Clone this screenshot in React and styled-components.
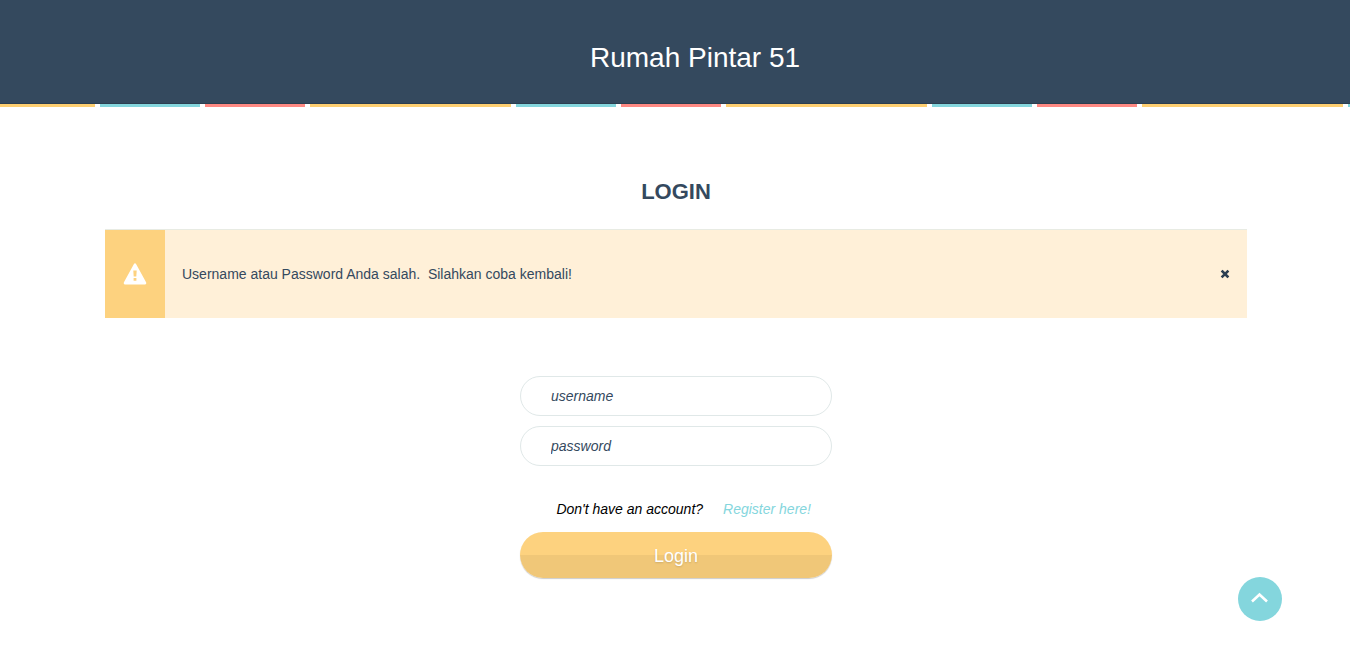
import React, { useState } from "react";
import styled, { createGlobalStyle } from "styled-components";

const GlobalStyle = createGlobalStyle`
  *, *::before, *::after { box-sizing: border-box; }
  body {
    margin: 0;
    background: #fff;
    color: #34495e;
    font-family: "Liberation Sans", Arial, sans-serif;
    font-size: 14px;
    line-height: 20px;
  }
`;

const Header = styled.header`
  height: 104px;
  padding: 41px 0 0 40px;
  background: #34495e;
  border-bottom: 1px solid #2c3e50;
  text-align: center;
`;

const Brand = styled.h1`
  margin: 0;
  color: #fff;
  font-size: 28px;
  font-weight: 400;
  line-height: 34px;
`;

const Stripes = styled.div`
  height: 3px;
  background: repeating-linear-gradient(
    90deg,
    #fecf71 0 95px,
    #fff 95px 100px,
    #84d6dd 100px 200px,
    #fff 200px 205px,
    #ff8983 205px 305px,
    #fff 305px 310px,
    #fecf71 310px 416px
  );
`;

const Main = styled.main`
  display: flex;
  flex-direction: column;
  align-items: center;
  padding: 70px 103px 40px 105px;
`;

const Title = styled.h2`
  margin: 0;
  font-size: 22px;
  font-weight: 700;
  line-height: 30px;
`;

const Alert = styled.div`
  display: flex;
  align-items: stretch;
  width: 100%;
  max-width: 1142px;
  min-height: 89px;
  margin-top: 22px;
  background: #fff0d8;
  border-top: 1px solid #e8ebe3;
`;

const AlertIcon = styled.div`
  display: flex;
  align-items: center;
  justify-content: center;
  flex: none;
  width: 60px;
  background: #fdd27f;
`;

const AlertText = styled.p`
  flex: 1;
  align-self: center;
  margin: 0;
  padding-left: 17px;
  white-space: pre-wrap;
`;

const CloseButton = styled.button`
  display: flex;
  align-items: center;
  justify-content: center;
  align-self: center;
  width: 45px;
  height: 40px;
  padding: 0;
  border: 0;
  background: none;
  color: #2c3e50;
  cursor: pointer;
`;

const Form = styled.form`
  display: flex;
  flex-direction: column;
  width: 312px;
  max-width: 100%;
  margin-top: 58px;
`;

const Field = styled.input`
  height: 40px;
  margin-bottom: 10px;
  padding: 0 30px;
  border: 1px solid #e0e8e8;
  border-radius: 20px;
  background: #fff;
  color: #34495e;
  font: italic 14px/20px "Liberation Sans", Arial, sans-serif;
  outline: none;
  &::placeholder { color: #34495e; opacity: 1; }
`;

const Prompt = styled.p`
  display: flex;
  justify-content: flex-end;
  gap: 20px;
  margin: 23px 0 13px;
  padding-right: 21px;
  color: #000;
  font-style: italic;
`;

const RegisterLink = styled.a`
  color: #84d6dd;
  text-decoration: none;
`;

const SubmitButton = styled.button`
  height: 46px;
  padding: 2px 0 0;
  border: 0;
  border-radius: 23px;
  background: linear-gradient(#fdd27f 50%, #f0c778 50%);
  box-shadow: 0 1px 1px rgba(0, 0, 0, 0.2);
  color: #fff;
  font: 18px/24px "Liberation Sans", Arial, sans-serif;
  text-shadow: 0 1px 2px rgba(0, 0, 0, 0.15);
  cursor: pointer;
`;

const TopLink = styled.a`
  position: fixed;
  right: 68px;
  bottom: 49px;
  display: flex;
  align-items: center;
  justify-content: center;
  width: 44px;
  height: 44px;
  border-radius: 50%;
  background: #84d6dd;
`;

const WarningIcon = () => (
  <svg width="24" height="24" viewBox="0 0 24 24" aria-hidden="true">
    <path
      fill="#fff"
      fillRule="evenodd"
      d="M10.8 2.2Q12 .4 13.2 2.2L23.2 20.4Q23.7 22.2 22 22.4H2Q.3 22.2.8 20.4ZM10.3 8.5 10.7 14.5H13.3L13.7 8.5ZM10.6 16V18.8H13.4V16Z"
    />
  </svg>
);

const CloseIcon = () => (
  <svg width="10" height="10" viewBox="0 0 10 10" aria-hidden="true">
    <path d="M2.5 2.5 7.5 7.5M7.5 2.5 2.5 7.5" stroke="currentColor" strokeWidth="2.5" strokeLinecap="square" />
  </svg>
);

const ChevronUp = () => (
  <svg width="20" height="16" viewBox="0 0 20 16" aria-hidden="true">
    <path d="M2 10.5 9.5 3.5 17 10.5" fill="none" stroke="#fff" strokeWidth="2.6" />
  </svg>
);

export default function App() {
  const [showAlert, setShowAlert] = useState(true);
  return (
    <>
      <GlobalStyle />
      <Header id="top">
        <Brand>Rumah Pintar 51</Brand>
      </Header>
      <Stripes />
      <Main>
        <Title>LOGIN</Title>
        {showAlert && (
          <Alert role="alert">
            <AlertIcon>
              <WarningIcon />
            </AlertIcon>
            <AlertText>{"Username atau Password Anda salah.  Silahkan coba kembali!"}</AlertText>
            <CloseButton type="button" aria-label="Close" onClick={() => setShowAlert(false)}>
              <CloseIcon />
            </CloseButton>
          </Alert>
        )}
        <Form onSubmit={(e) => e.preventDefault()}>
          <Field type="text" name="username" placeholder="username" aria-label="username" />
          <Field type="password" name="password" placeholder="password" aria-label="password" />
          <Prompt>
            <span>Don't have an account?</span>
            <RegisterLink href="#register">Register here!</RegisterLink>
          </Prompt>
          <SubmitButton type="submit">Login</SubmitButton>
        </Form>
      </Main>
      <TopLink href="#top" aria-label="Back to top">
        <ChevronUp />
      </TopLink>
    </>
  );
}
